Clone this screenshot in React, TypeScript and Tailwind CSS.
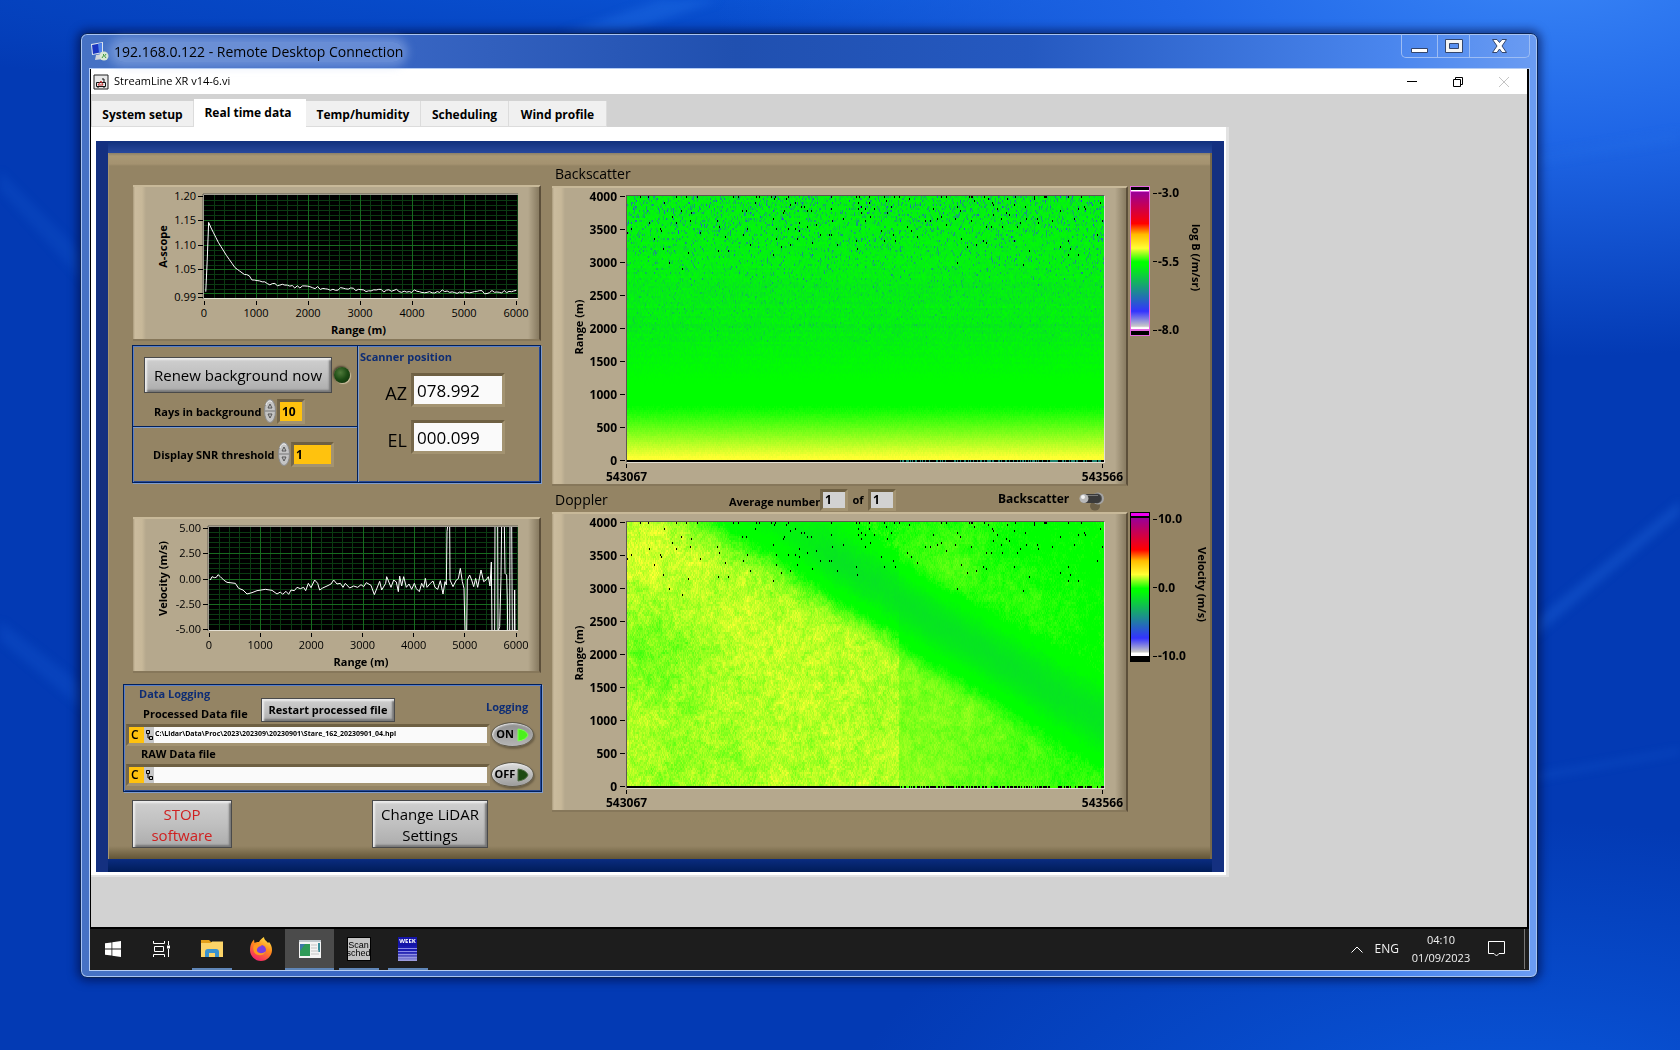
import React, { useEffect, useRef } from "react";

/* ---------- shared numbers and helpers ---------- */

const PLOT_W = 477;
const PLOT_H = 266;

function rng(seed: number) {
  let s = seed;
  return () => {
    s = (s + 0x6d2b79f5) | 0;
    let t = Math.imul(s ^ (s >>> 15), 1 | s);
    t = (t + Math.imul(t ^ (t >>> 7), 61 | t)) ^ t;
    return ((t ^ (t >>> 14)) >>> 0) / 4294967296;
  };
}

type Stop = [number, number, number, number];
const RAMP: Stop[] = [
  [0, 200, 200, 200],
  [0.13, 51, 51, 255],
  [0.49, 0, 255, 0],
  [0.51, 0, 255, 0],
  [0.6, 255, 255, 51],
  [0.7, 255, 187, 0],
  [0.78, 255, 0, 0],
  [1, 153, 0, 153],
];

function colour(t: number): [number, number, number] {
  const v = Math.min(1, Math.max(0, t));
  for (let i = 1; i < RAMP.length; i++) {
    if (v <= RAMP[i][0]) {
      const a = RAMP[i - 1];
      const b = RAMP[i];
      const f = (v - a[0]) / (b[0] - a[0]);
      return [a[1] + (b[1] - a[1]) * f, a[2] + (b[2] - a[2]) * f, a[3] + (b[3] - a[3]) * f];
    }
  }
  return [153, 0, 153];
}

function smooth(t: number) {
  const v = Math.min(1, Math.max(0, t));
  return v * v * (3 - 2 * v);
}

/* Gaussian bump centred on (cu, cv) */
function bump(u: number, v: number, cu: number, cv: number, ru: number, rv: number) {
  const a = (u - cu) / ru;
  const b = (v - cv) / rv;
  return Math.exp(-(a * a + b * b));
}

/* Value noise on a coarse lattice, roughly in -1..1 */
function lattice(seed: number, cw: number, ch: number) {
  const r = rng(seed);
  const cols = Math.ceil(PLOT_W / cw) + 2;
  const rows = Math.ceil(PLOT_H / ch) + 2;
  const g = Array.from({ length: cols * rows }, () => r() * 2 - 1);
  return (x: number, y: number) => {
    const gx = x / cw;
    const gy = y / ch;
    const ix = Math.floor(gx);
    const iy = Math.floor(gy);
    const fx = gx - ix;
    const fy = gy - iy;
    const a = g[iy * cols + ix];
    const b = g[iy * cols + ix + 1];
    const c = g[(iy + 1) * cols + ix];
    const d = g[(iy + 1) * cols + ix + 1];
    return (a * (1 - fx) + b * fx) * (1 - fy) + (c * (1 - fx) + d * fx) * fy;
  };
}

function paintMap(ctx: CanvasRenderingContext2D, kind: "backscatter" | "doppler") {
  const img = ctx.createImageData(PLOT_W, PLOT_H);
  const noise = rng(kind === "backscatter" ? 11 : 29);
  const dropouts = rng(5);
  const floor = rng(91);
  const fine = lattice(3, 4, 5);
  const mid = lattice(8, 11, 13);
  const big = lattice(17, 50, 45);
  const rowTint = rng(44);

  const put = (x: number, y: number, c: number[]) => {
    if (y >= PLOT_H) return;
    const o = (y * PLOT_W + x) * 4;
    img.data[o] = c[0];
    img.data[o + 1] = c[1];
    img.data[o + 2] = c[2];
    img.data[o + 3] = 255;
  };

  for (let y = 0; y < PLOT_H; y += 2) {
    const v = y / PLOT_H;
    const tint = rowTint() - 0.5;
    for (let x = 0; x < PLOT_W; x++) {
      const u = x / PLOT_W;
      const n = noise();
      const m = noise();
      let t: number;
      if (kind === "backscatter") {
        const r = 1 - v;
        if (r < 0.22) {
          t = 0.508 + 0.092 * Math.pow(1 - Math.max(0, r - 0.02) / 0.2, 1.1) + (n - 0.5) * 0.006;
        } else {
          const k = smooth((r - 0.24) / 0.3);
          const fade = 1 - 0.3 * smooth((r - 0.6) / 0.3);
          t = 0.494 - (0.042 * n + 0.012 + tint * 0.016) * k * fade;
          if (r > 0.45 && m < 0.35 * (r - 0.4)) t -= 0.05 * n + 0.02;
          if (r > 0.66 && m < 0.7 * (r - 0.64)) t -= 0.08 * n + 0.02;
          if (r > 0.78 && m < 0.2 * (r - 0.76)) t -= 0.12 * n;
        }
      } else {
        const right = u > 0.57;
        const d = v - (0.02 + (u - 0.32) * 1.04) + (right ? -0.015 : 0);
        let base: number;
        if (d >= 0) {
          base = right
            ? 0.556 - 0.03 * smooth((u - 0.57) / 0.43)
            : 0.568 +
              0.018 * bump(u, v, 0.05, 0.12, 0.15, 0.2) +
              0.016 * bump(u, v, 0.3, 0.46, 0.16, 0.16) +
              0.01 * bump(u, v, 0.45, 0.85, 0.15, 0.2) -
              0.014 * bump(u, v, 0.05, 0.5, 0.16, 0.14) -
              0.01 * bump(u, v, 0.25, 0, 0.12, 0.18);
        } else {
          base = 0.506 + 0.028 * bump(u, v, 0.66, 0.14, 0.13, 0.2) + 0.02 * bump(u, v, 0.83, 0.33, 0.1, 0.14);
        }
        const w = d >= 0 ? 0.26 : 0.21;
        const edge = smooth(Math.abs(d) / w);
        const amp = 0.35 + 0.65 * edge;
        const scale = right ? 0.65 : 1;
        const dark = 0.444 + 0.036 * (1 - smooth((u - 0.28) / 0.2));
        t = dark + (base - dark) * edge;
        t += (big(x, y) * 0.007 + mid(x, y) * 0.007 + fine(x, y) * 0.012 + (n - 0.5) * 0.022) * amp * scale;
      }
      let c: number[] = colour(t);
      const drop = dropouts();
      const chance = y === 0 ? 0.06 : v < 0.27 ? 0.015 * (1 - v / 0.3) : v < 0.3 ? 0.0004 : 0;
      if (drop < chance) c = [0, 0, 0];
      put(x, y, c);
      put(x, y + 1, c);
    }
  }
  for (let x = 0; x < PLOT_W; x++) {
    const lit = x > PLOT_W * 0.57 && floor() < 0.45;
    const c = lit ? (kind === "doppler" ? [60, 255, 0] : [30, 130, 110]) : [0, 0, 0];
    put(x, PLOT_H - 2, c);
    put(x, PLOT_H - 1, c);
  }
  ctx.putImageData(img, 0, 0);
}

/* ---------- graph building blocks ---------- */

function GraphFrame({ children, className }: { children: React.ReactNode; className?: string }) {
  return (
    <div
      className={
        "border-t-2 border-r-2 border-b-2 border-t-[#c8b999] border-r-[#5c4f3a] border-b-[#86775a] bg-[linear-gradient(90deg,#a99a7b_0,#cbbc9e_2px,#c7b899_9px,#b5a88d_13px,#b5a88d_calc(100%-11px),#8b7e64_calc(100%-1px))] " +
        (className ?? "")
      }
    >
      {children}
    </div>
  );
}

type LineGraphProps = {
  x0: number;
  yLabel: string;
  yTicks: { y: number; label: string }[];
  viewBox: string;
  trace: string;
  majorY: number[];
  minorY: number[];
};

function LineGraph({ x0, yLabel, yTicks, viewBox, trace, majorY, minorY }: LineGraphProps) {
  const x1 = 384;
  const top = 8;
  const h = 103;
  const w = x1 - x0;
  return (
    <svg width="408" height="152" className="block font-['Open_Sans',sans-serif]" role="img" aria-label={yLabel + " against range"}>
      <rect x={x0 - 1} y={top - 1} width={w + 2} height={h + 2} fill="#e4dfd2" />
      <path d={`M${x0 - 1} ${top + h + 1}V${top - 1}H${x1 + 1}`} stroke="#5d5a50" fill="none" />
      <rect x={x0} y={top} width={w} height={h} fill="#000" />
      <g stroke="#0b3a12" shapeRendering="crispEdges">
        {Array.from({ length: 30 }, (_, i) => (
          <line key={i} x1={x0 + ((i + 1) * w) / 30} x2={x0 + ((i + 1) * w) / 30} y1={top} y2={top + h} />
        ))}
        {minorY.map((y) => (
          <line key={y} x1={x0} x2={x1} y1={top + y} y2={top + y} />
        ))}
      </g>
      <g stroke="#176b1f" shapeRendering="crispEdges">
        {[1, 2, 3, 4, 5].map((i) => (
          <line key={i} x1={x0 + (i * w) / 6} x2={x0 + (i * w) / 6} y1={top} y2={top + h} />
        ))}
        {majorY.map((y) => (
          <line key={y} x1={x0} x2={x1} y1={top + y} y2={top + y} />
        ))}
      </g>
      <svg x={x0} y={top} width={w} height={h} viewBox={viewBox} preserveAspectRatio="none">
        <polyline points={trace} fill="none" stroke="#fff" vectorEffect="non-scaling-stroke" />
      </svg>
      <g stroke="#000" shapeRendering="crispEdges">
        {yTicks.map((t) => (
          <line key={t.y} x1={x0 - 6} x2={x0 - 1} y1={top + t.y} y2={top + t.y} />
        ))}
        {[0, 1, 2, 3, 4, 5, 6].map((i) => (
          <line key={i} x1={x0 + (i * (w - 1)) / 6} x2={x0 + (i * (w - 1)) / 6} y1={top + h + 3} y2={top + h + 7} />
        ))}
      </g>
      <g fontSize="11">
        {yTicks.map((t) => (
          <text key={t.y} x={x0 - 8} y={top + t.y + 4} textAnchor="end">
            {t.label}
          </text>
        ))}
        {[0, 1, 2, 3, 4, 5, 6].map((i) => (
          <text key={i} x={x0 + (i * (w - 1)) / 6} y={top + h + 19} textAnchor="middle">
            {i * 1000}
          </text>
        ))}
      </g>
      <g fontSize="11" fontWeight="700">
        <text x={x0 + w / 2 - 2} y="147" textAnchor="middle">
          Range (m)
        </text>
        <text textAnchor="middle" transform={`translate(34 ${top + h / 2}) rotate(-90)`}>
          {yLabel}
        </text>
      </g>
    </svg>
  );
}

function HeatGraph({ kind }: { kind: "backscatter" | "doppler" }) {
  const ref = useRef<HTMLCanvasElement>(null);
  useEffect(() => {
    const ctx = ref.current?.getContext("2d");
    if (ctx) paintMap(ctx, kind);
  }, [kind]);
  return (
    <GraphFrame className="h-[300px]">
      <div className="flex pt-[7px]">
        <svg width="74" height="268" className="block shrink-0 overflow-visible font-['Open_Sans',sans-serif] text-[12px] font-bold" aria-hidden="true">
          {[4000, 3500, 3000, 2500, 2000, 1500, 1000, 500, 0].map((v, i) => (
            <g key={v}>
              <text x="65" y={6 + i * 33} textAnchor="end">
                {v}
              </text>
              <line x1="68" x2="73" y1={1 + i * 33} y2={1 + i * 33} stroke="#000" shapeRendering="crispEdges" />
            </g>
          ))}
          <text transform="translate(31 132) rotate(-90)" textAnchor="middle" fontSize="11">
            Range (m)
          </text>
        </svg>
        <canvas
          ref={ref}
          width={PLOT_W}
          height={PLOT_H}
          role="img"
          aria-label={kind + " time and range map"}
          className="box-content block border border-t-[#5d5a50] border-r-[#e4dfd2] border-b-[#e4dfd2] border-l-[#5d5a50]"
        />
      </div>
      <div className="flex justify-between pt-px pr-[3px] pl-[54px] text-[12px] leading-[14px] font-bold">
        <div className="flex flex-col items-center gap-[2px]">
          <span className="h-[4px] w-px bg-black" />
          543067
        </div>
        <div className="flex flex-col items-center gap-[2px]">
          <span className="h-[4px] w-px bg-black" />
          543566
        </div>
      </div>
    </GraphFrame>
  );
}

function ColourScale({ kind, ticks, title }: { kind: "b" | "d"; ticks: string[]; title: string }) {
  return (
    <div className="flex h-[150px] items-start">
      {kind === "b" ? (
        <div className="w-5 shrink-0 border border-[#e668e0]">
          <div className="h-[3px] bg-black" />
          <div className="h-px bg-white" />
          <div className="h-px bg-[#e668e0]" />
          <div className="h-[137px] bg-[linear-gradient(180deg,#990099_0,#ff0000_23%,#ffbb00_31%,#ffff33_41%,#00ff00_51%,#00ff00_53%,#3333ff_87%,#c8c8c8_98%,#fff_99%)]" />
          <div className="h-[2px] bg-[#e668e0]" />
          <div className="h-[4px] bg-black" />
        </div>
      ) : (
        <div className="w-5 shrink-0 border border-black">
          <div className="h-[3px] bg-[#f000f0]" />
          <div className="h-[2px] bg-black" />
          <div className="h-[138px] bg-[linear-gradient(180deg,#990099_0,#ff0000_23%,#ffbb00_31%,#ffff33_41%,#00ff00_51%,#00ff00_53%,#3333ff_87%,#c8c8c8_97%,#fff_98%)]" />
          <div className="h-[5px] bg-black" />
        </div>
      )}
      <div className="ml-[3px] flex h-[151px] w-[35px] shrink-0 flex-col justify-between text-[12px] leading-[14px] font-bold">
        {ticks.map((t) => (
          <div key={t} className="flex items-center whitespace-nowrap">
            <span className="mr-px h-px w-[4px] shrink-0 bg-black" />
            {t}
          </div>
        ))}
      </div>
      <div
        className={
          "text-[11px] leading-[14px] font-bold whitespace-nowrap [writing-mode:vertical-rl] " +
          (kind === "b" ? "mt-[38px] ml-px" : "mt-[35px] ml-[7px]")
        }
      >
        {title}
      </div>
    </div>
  );
}

/* ---------- trace data ---------- */

const aScope = (() => {
  const knots = [
    [350, 785], [354, 690], [358, 575], [365, 592], [385, 635], [408, 675], [432, 712], [465, 738],
    [494, 751], [530, 762], [600, 769], [700, 776], [850, 782], [1000, 784], [1140, 787], [1222, 781],
  ];
  const r = rng(7);
  const out: string[] = [];
  for (let i = 1; i < knots.length; i++) {
    const [ax, ay] = knots[i - 1];
    const [bx, by] = knots[i];
    const n = Math.max(1, Math.round((bx - ax) / 7));
    for (let k = 0; k < n; k++) {
      const jitter = ax > 460 ? (r() - 0.5) * 10 : 0;
      out.push(`${ax + ((bx - ax) * k) / n},${ay + ((by - ay) * k) / n + jitter}`);
    }
  }
  out.push("1222,781");
  return out.join(" ");
})();

const velocity =
  "270,240 275,230 282,233 288,232 293,224 300,230 310,240 320,247 345,250 355,265 368,270 380,282 395,278 410,272 435,268 455,271 470,282 480,276 487,283 497,274 505,283 512,270 522,272 530,262 540,266 550,262 556,272 564,250 572,263 583,240 592,250 598,270 607,264 620,258 632,252 640,240 650,252 660,250 668,262 675,250 688,264 700,258 712,262 722,254 730,260 738,248 752,256 762,284 778,244 784,270 796,250 799,230 812,262 820,240 828,246 834,275 838,228 844,258 850,230 858,262 866,252 874,268 882,250 888,266 897,275 904,250 910,262 915,235 920,262 930,250 938,243 944,262 952,268 960,242 968,282 974,245 978,255 980,94 983,70 988,70 989,240 998,260 1008,240 1014,236 1020,205 1026,245 1031,265 1034,395 1039,395 1041,240 1048,225 1054,240 1060,260 1066,235 1072,262 1082,210 1090,245 1097,240 1104,230 1109,258 1113,186 1115,395 1123,395 1124,70 1132,70 1133,395 1138,380 1142,230 1144,70 1152,70 1154,220 1159,225 1161,300 1162,395 1168,395 1169,70 1174,70 1176,395 1182,395 1183,270 1184,395";

/* ---------- LabVIEW controls ---------- */

function BevelButton({ children, className }: { children: React.ReactNode; className: string }) {
  return (
    <button
      type="button"
      className={
        "border border-[#4a4a4a] bg-gradient-to-b from-[#cfcfcf] via-[#c0c0c0] to-[#acacac] shadow-[inset_2px_2px_2px_#ececec,inset_-2px_-2px_2px_#777] " +
        className
      }
    >
      {children}
    </button>
  );
}

function Spinner() {
  return (
    <svg width="12" height="24" viewBox="0 0 12 24" aria-hidden="true">
      <ellipse cx="6" cy="12" rx="5.5" ry="11.5" fill="#c4c4c4" stroke="#8b8b8b" />
      <path d="M2 6C3 2 6 1 8 3" stroke="#f4f4f4" fill="none" />
      <path d="M1 12H11" stroke="#777" />
      <path d="M6 5L8 9H4ZM6 19L8 15H4Z" fill="none" stroke="#555" />
    </svg>
  );
}

const sunken =
  "border-t-[3px] border-l-[3px] border-r-[3px] border-b-[3px] border-t-[#6e6043] border-l-[#75674a] border-r-[#a39371] border-b-[#a39371] ";

function BoxLine({ children, className }: { children: React.ReactNode; className: string }) {
  return (
    <div className={"border border-[#00205c] shadow-[inset_1px_1px_0_#5c7fc4,inset_-1px_-1px_0_#274894,1px_1px_0_#7f9ccc] " + className}>
      {children}
    </div>
  );
}

function PathRow({ id, value, on }: { id: string; value: string; on: boolean }) {
  return (
    <div className="flex items-center">
      <div className={"flex h-[22px] w-[364px] " + sunken}>
        <span className="flex w-[15px] items-center bg-[#ffc20e] pl-[2px] text-[12px] font-semibold">C</span>
        <span className="flex w-[10px] items-center justify-center bg-[#c6c6c6]">
          <svg width="8" height="12" viewBox="0 0 8 12" fill="none" stroke="#000" aria-hidden="true">
            <path d="M1.5 1.5H4.5V4.5H1.5ZM4.5 7.500H7.500V10.500H4.500ZM3 5V9H4.500" />
          </svg>
        </span>
        <input id={id} type="text" defaultValue={value} className="min-w-0 flex-1 bg-[#fafafa] px-px pb-px text-[7px] font-bold outline-none" />
      </div>
      <button
        type="button"
        aria-pressed={on}
        className={
          "ml-px flex h-[25px] w-[43px] items-center rounded-[50%] border border-[#5f5a4c] pl-px text-[11px] font-bold shadow-[1px_2px_2px_#6b5f47,inset_1px_1px_2px_#eee] " +
          (on ? "bg-gradient-to-b from-[#8e8e8e] to-[#b5b5b5]" : "bg-gradient-to-b from-[#dcdcdc] to-[#9c9c9c]")
        }
      >
        <span className="w-[24px] text-center">{on ? "ON" : "OFF"}</span>
        <svg width="12" height="14" viewBox="0 0 12 14" aria-hidden="true">
          <path d="M1 1Q9 2 11 7Q9 12 1 13Z" fill={on ? "#4cf01c" : "#1d4a12"} stroke={on ? "#7dff55" : "#4c6a40"} />
        </svg>
      </button>
    </div>
  );
}

function LeftColumn() {
  return (
    <div className="w-[420px] shrink-0 pt-[32px]">
      <div className="pl-[10px]">
        <GraphFrame className="h-[156px] w-[408px]">
          <LineGraph
            x0={71}
            yLabel="A-scope"
            yTicks={[
              { y: 1, label: "1.20" },
              { y: 25, label: "1.15" },
              { y: 50, label: "1.10" },
              { y: 74, label: "1.05" },
              { y: 98, label: "" },
              { y: 102, label: "0.99" },
            ]}
            viewBox="345 492 879 312"
            trace={aScope}
            majorY={[25, 50, 74, 98]}
            minorY={[5, 10, 15, 20, 30, 35, 40, 45, 55, 60, 65, 70, 79, 84, 89, 94]}
          />
        </GraphFrame>
      </div>

      <BoxLine className="mt-1 ml-[9px] flex h-[138px] w-[409px]">
        <div className="flex w-[225px] flex-col border-r border-[#00205c] shadow-[1px_0_0_#7f9ccc]">
          <div className="h-[81px] border-b border-[#00205c] pt-[11px] pl-[11px] shadow-[0_1px_0_#7f9ccc]">
            <div className="flex items-center">
              <BevelButton className="h-[36px] w-[188px] pt-px text-[15px] whitespace-nowrap">Renew background now</BevelButton>
              <span className="ml-[2px] size-[16px] rounded-full bg-[radial-gradient(circle_at_40%_35%,#4f7a3a,#1c4a14_50%,#0d2a0a)] shadow-[1px_1px_1px_#cfc3a2,-1px_-1px_2px_#4a4030]" />
            </div>
            <div className="mt-[5px] flex items-center pl-[10px]">
              <label htmlFor="rays" className="w-[108px] pt-[2px] text-[11px] leading-4 font-bold whitespace-nowrap">
                Rays in background
              </label>
              <span className="ml-[2px]">
                <Spinner />
              </span>
              <input id="rays" type="text" defaultValue="10" className={"mt-px ml-px h-[25px] w-[28px] bg-[#ffc20e] px-[2px] text-[12px] font-bold outline-none " + sunken} />
            </div>
          </div>
          <div className="flex items-center pt-[14px] pl-[20px]">
            <label htmlFor="snr" className="w-[124px] pt-[2px] text-[11px] leading-4 font-bold whitespace-nowrap">
              Display SNR threshold
            </label>
            <span className="ml-px">
              <Spinner />
            </span>
            <input id="snr" type="text" defaultValue="1" className={"mt-px ml-px h-[25px] w-[43px] bg-[#ffc20e] px-[2px] text-[12px] font-bold outline-none " + sunken} />
          </div>
        </div>
        <div className="flex-1 pt-[3px] pl-[2px]">
          <h3 className="text-[11px] leading-4 font-bold text-[#0e2d74]">Scanner position</h3>
          {[
            ["AZ", "078.992", "az", "mt-[8px]"],
            ["EL", "000.099", "el", "mt-[13px]"],
          ].map(([name, value, id, gap]) => (
            <div key={id} className={"flex items-center " + gap}>
              <label htmlFor={id} className="w-[47px] pt-[5px] text-right text-[18px] leading-6">
                {name}
              </label>
              <input id={id} readOnly defaultValue={value} className={"ml-1 h-[34px] w-[94px] bg-[#fafafa] px-[3px] pt-px text-[17px] outline-none " + sunken} />
            </div>
          ))}
        </div>
      </BoxLine>

      <div className="mt-[34px] pl-[10px]">
        <GraphFrame className="h-[156px] w-[408px]">
          <LineGraph
            x0={76}
            yLabel="Velocity (m/s)"
            yTicks={[
              { y: 1, label: "5.00" },
              { y: 26, label: "2.50" },
              { y: 52, label: "0.00" },
              { y: 77, label: "-2.50" },
              { y: 102, label: "-5.00" },
            ]}
            viewBox="266 81 924 309"
            trace={velocity}
            majorY={[26, 52, 77]}
            minorY={[5, 10, 15, 20, 31, 36, 41, 46, 57, 62, 67, 72, 82, 87, 92, 97]}
          />
        </GraphFrame>
      </div>

      <BoxLine className="mt-[11px] h-[108px] w-[419px] pl-[2px]">
        <div className="flex h-[37px] pl-[8px]">
          <div className="w-[127px] pt-[1px] pl-[5px]">
            <h3 className="text-[11px] leading-4 font-bold text-[#0e2d74]">Data Logging</h3>
            <label htmlFor="proc" className="block pt-[4px] pl-[4px] text-[11px] leading-4 font-bold whitespace-nowrap">
              Processed Data file
            </label>
          </div>
          <div className="pt-[11px]">
            <BevelButton className="h-[24px] w-[134px] text-[11px] font-bold whitespace-nowrap">Restart processed file</BevelButton>
          </div>
          <span className="pt-[14px] pl-[91px] text-[11px] leading-4 font-bold text-[#0e2d74]">Logging</span>
        </div>
        <PathRow id="proc" value="C:\Lidar\Data\Proc\2023\202309\20230901\Stare_162_20230901_04.hpl" on />
        <label htmlFor="raw" className="block h-[15px] pl-[15px] text-[11px] leading-[14px] font-bold">
          RAW Data file
        </label>
        <PathRow id="raw" value="" on={false} />
      </BoxLine>

      <div className="mt-[8px] flex pl-[9px]">
        <BevelButton className="h-[48px] w-[100px] pt-[2px] text-[15px] leading-[21px] text-[#cf2020]">
          STOP
          <br />
          software
        </BevelButton>
        <BevelButton className="ml-[140px] h-[48px] w-[116px] pt-[2px] text-[15px] leading-[21px] whitespace-nowrap">
          Change LiDAR
          <br />
          Settings
        </BevelButton>
      </div>
    </div>
  );
}

function LidarPanel() {
  const counter = "mt-px h-[22px] w-[28px] bg-[#d2d2d2] px-[2px] text-[12px] font-bold outline-none " + sunken;
  return (
    <div className="border-x-[12px] border-x-[#143080] bg-[linear-gradient(180deg,#10307c_0,#28489c_12px,#0a2c80_calc(100%-13px),#001c58)] pt-[12px] pb-[13px]">
      <div className="flex h-[706px] w-[1104px] border-r-2 border-l border-r-[#776849] border-l-[#a6956f] bg-[linear-gradient(180deg,#8a7f68_0,#a99874_3px,#a49270_11px,#948464_13px,#948464_calc(100%-13px),#625536)] pl-[14px]">
        <LeftColumn />
        <div className="ml-[9px] w-[576px] shrink-0">
          <h2 className="h-[33px] pt-[11px] pl-[3px] text-[14px] leading-[20px]">Backscatter</h2>
          <HeatGraph kind="backscatter" />
          <div className="flex h-[26px] items-center pl-[3px]">
            <h2 className="w-[174px] pt-[2px] text-[14px] leading-[20px]">Doppler</h2>
            <label htmlFor="avg" className="w-[91px] pt-[6px] text-[11px] leading-4 font-bold whitespace-nowrap">
              Average number
            </label>
            <input id="avg" readOnly defaultValue="1" className={counter} />
            <label htmlFor="avgof" className="w-[20px] pt-[2px] text-center text-[11px] leading-4 font-bold">
              of
            </label>
            <input id="avgof" readOnly defaultValue="1" className={counter} />
            <span className="ml-[102px] text-[12px] font-bold">Backscatter</span>
            <button type="button" aria-label="Switch between backscatter and SNR" className="mt-1 ml-[9px]">
              <svg width="28" height="20" viewBox="0 0 28 20" aria-hidden="true">
                <ellipse cx="17" cy="15" rx="5" ry="4.500" fill="#6b5f47" />
                <circle cx="20" cy="7.500" r="6" fill="#a4a4a4" />
                <circle cx="19" cy="7.500" r="5" fill="#555" />
                <rect x="2" y="3" width="21" height="9" rx="4.500" fill="#3a3a3a" />
                <path d="M6 4.500H20" stroke="#777" />
                <circle cx="6" cy="7.500" r="4.500" fill="#b9b9b9" />
                <circle cx="5" cy="6" r="2" fill="#f4f4f4" />
              </svg>
            </button>
          </div>
          <HeatGraph kind="doppler" />
        </div>
        <div className="ml-[2px] pt-[33px]">
          <ColourScale kind="b" ticks={["-3.0", "-5.5", "-8.0"]} title="log B (/m/sr)" />
          <div className="h-[176px]" />
          <ColourScale kind="d" ticks={["10.0", "0.0", "-10.0"]} title="Velocity (m/s)" />
        </div>
      </div>
    </div>
  );
}

/* ---------- remote session chrome ---------- */

function Tabs() {
  const tabs = [
    ["System setup", "w-[102px]"],
    ["Real time data", "w-[112px]"],
    ["Temp/humidity", "w-[115px]"],
    ["Scheduling", "w-[88px]"],
    ["Wind profile", "w-[98px]"],
  ];
  return (
    <div role="tablist" className="flex h-[33px] items-end pl-px">
      {tabs.map(([name, width], i) => (
        <button
          key={name}
          type="button"
          role="tab"
          aria-selected={i === 1}
          className={
            "text-[12px] font-bold whitespace-nowrap " +
            width +
            (i === 1 ? " h-[28px] bg-white pr-[4px] pb-px" : " h-[26px] border-r border-b border-[#dcdcdc] bg-[#f0f0f0] pt-[2px]")
          }
        >
          {name}
        </button>
      ))}
    </div>
  );
}

function TaskItem({
  label,
  open,
  active,
  width = "w-[49px]",
  children,
}: {
  label: string;
  open?: boolean;
  active?: boolean;
  width?: string;
  children: React.ReactNode;
}) {
  return (
    <button type="button" aria-label={label} className={"flex h-full flex-col items-center " + width + (active ? " bg-[#4b4b4b]" : "")}>
      <span className="flex flex-1 items-center">{children}</span>
      <span className={"h-[2px] " + (active ? "w-full bg-[#5f86b8]" : open ? "w-[40px] bg-[#5f86b8]" : "w-0")} />
    </button>
  );
}

function Taskbar() {
  return (
    <div className="flex h-[41px] items-stretch bg-[#1d1d1d] text-[#f2f2f2]">
      <TaskItem label="Start" width="w-[46px]">
        <svg width="16" height="16" viewBox="0 0 16 16" fill="#fff">
          <path d="M0 2.300L6.500 1.400V7.600H0ZM7.300 1.300L16 0V7.600H7.300ZM0 8.400H6.500V14.600L0 13.700ZM7.300 8.400H16V16L7.300 14.700Z" />
        </svg>
      </TaskItem>
      <TaskItem label="Task view" width="w-[51px]">
        <svg width="17" height="16" viewBox="0 0 17 16" fill="none" stroke="#fff">
          <path d="M0.500 0V2.500H11.500V0M0.500 16V13.500H11.500V16M1.500 5.500H10.500V10.500H1.500ZM15.500 0V4M15.500 8V16" />
          <path d="M14 4.500H17V7.500H14Z" fill="#fff" stroke="none" />
        </svg>
      </TaskItem>
      <TaskItem label="File Explorer" open>
        <svg width="22" height="19" viewBox="0 0 22 19">
          <path d="M0 1H8L10 3H22V18H0Z" fill="#e5a11a" />
          <path d="M0 4H10L11 2.500H22V18H0Z" fill="#fcd468" />
          <path d="M4 18V13Q4 10 7 10H15Q18 10 18 13V18H14V14H8V18Z" fill="#3a92cf" />
        </svg>
      </TaskItem>
      <TaskItem label="Firefox">
        <svg width="24" height="24" viewBox="0 0 24 24">
          <defs>
            <linearGradient id="ff" x1="0.8" y1="0" x2="0.3" y2="1">
              <stop offset="0" stopColor="#ffe94a" />
              <stop offset="0.45" stopColor="#ff8a1c" />
              <stop offset="1" stopColor="#f5206c" />
            </linearGradient>
          </defs>
          <path d="M1 13C1 9 2 7 3 5L5 2.500L5.500 6C7 5 8 5 10 5C11 3 13 1 15 0C15 3 18 4 19 6L20 5C22 7 23 10 23 13C23 19 18 24 12 24C6 24 1 19 1 13Z" fill="url(#ff)" />
          <circle cx="12" cy="13" r="5" fill="#7a3fe0" />
          <path d="M5 8C8 6 11 7 13 9C10 9 9 10 8 12C7 16 13 18 17 14C16 19 8 20 5 15C4 12 4 10 5 8Z" fill="#ff9a1f" />
        </svg>
      </TaskItem>
      <TaskItem label="StreamLine XR" active>
        <svg width="22" height="18" viewBox="0 0 22 18">
          <path d="M0 0H22V18H0Z" fill="#f4f4f4" />
          <path d="M0 0H22V2H0Z" fill="#bfc7cc" />
          <path d="M1 4H11V16H1Z" fill="#2f9a58" />
          <path d="M1 4H6L1 11Z" fill="#3c78a8" />
          <path d="M19 3H21V12H19Z" fill="#3b8f9a" />
          <path d="M12 5H18M12 8H18M12 11H20M12 14H20" stroke="#c4c4c4" />
        </svg>
      </TaskItem>
      <TaskItem label="Scan scheduler" open>
        <span className="flex size-[24px] flex-col items-center justify-center border border-black bg-[#c4c4c4] font-['Liberation_Sans',sans-serif] text-[9px] leading-[8px] text-black">
          <span>Scan</span>
          <span>sched</span>
        </span>
      </TaskItem>
      <TaskItem label="Week scheduler" open>
        <span className="flex h-[24px] w-[19px] flex-col items-center bg-[linear-gradient(180deg,transparent_60%,#9c9cdc),repeating-linear-gradient(180deg,#1a1ab0_0,#1a1ab0_2px,#8a8ae8_2px,#8a8ae8_3px)] text-[6px] leading-[9px] font-bold text-white">
          <span className="w-full bg-[#1414a8]">WEEK</span>
        </span>
      </TaskItem>
      <div className="ml-auto flex items-center pb-px text-[12px]">
        <button type="button" aria-label="Show hidden icons">
          <svg width="12" height="7" viewBox="0 0 12 7" fill="none" stroke="#fff">
            <path d="M0.500 6.500L6 1L11.500 6.500" />
          </svg>
        </button>
        <span className="ml-[12px]">ENG</span>
        <div className="ml-[12px] w-[60px] text-center text-[11px] leading-[18px]">
          04:10
          <br />
          01/09/2023
        </div>
        <button type="button" aria-label="Notifications" className="ml-[17px]">
          <svg width="17" height="16" viewBox="0 0 17 16" fill="none" stroke="#fff">
            <path d="M0.500 0.500H16.500V12.500H11L8.500 15L6 12.500H0.500Z" />
          </svg>
        </button>
        <span className="ml-[19px] h-[40px] w-px bg-[#777]" />
        <span className="w-[4px]" />
      </div>
    </div>
  );
}

export default function App() {
  return (
    <div className="relative min-h-screen overflow-hidden bg-[#033ab4] bg-[radial-gradient(ellipse_50%_38%_at_92%_-4%,#3a86f8_0,#1f66e6_45%,transparent_100%),radial-gradient(ellipse_70%_12%_at_50%_-2%,#0a56d8,transparent),radial-gradient(ellipse_40%_30%_at_90%_108%,#0a58dc,transparent)] pt-[33px] pr-[142px] pb-[73px] pl-[80px] font-['Open_Sans','Noto_Sans',sans-serif] text-black">
      <svg className="absolute inset-0 h-full w-full" viewBox="0 0 1680 1050" preserveAspectRatio="none" aria-hidden="true">
        <g fill="#2a7af0" className="blur-[4px]">
          <path d="M560 34L660 0H720L620 34Z" opacity="0.300" />
          <path d="M1530 155L1680 130V142L1530 165Z" opacity="0.120" />
          <path d="M1530 624L1680 500V514L1530 640Z" opacity="0.250" />
          <path d="M1530 774L1680 748V753L1530 780Z" opacity="0.180" />
          <path d="M0 170L90 260V290L0 190Z" opacity="0.120" />
          <path d="M0 620L90 690V715L0 640Z" opacity="0.150" />
        </g>
      </svg>
      <div className="relative rounded-[7px] border border-[#0a2558] bg-[linear-gradient(90deg,#4672c4_0,#3a67c4_20%,#2050b0_45%,#2559c0_65%,#4a86ee_90%,#6b9cf2_100%)] pr-[7px] pb-[6px] pl-[8px] shadow-[inset_0_0_0_1px_#a9c4f2,0_0_10px_3px_rgba(0,10,60,0.6)]">
        <div className="flex h-[34px] items-start">
          <svg width="20" height="20" viewBox="0 0 20 20" className="mt-[8px] ml-px" aria-hidden="true">
            <path d="M1 2L13 0V11L2 13Z" fill="#dfe6ee" />
            <path d="M2 3L12 1V10L3 12Z" fill="#1a35c0" />
            <path d="M8 2L12 1V10L9 10.500Z" fill="#4f83ea" />
            <path d="M6 13L12 12L13 17L5 18Z" fill="#cfd5da" />
            <circle cx="14" cy="14" r="4.500" fill="#d9e8d4" />
            <path d="M12 16L14 13L13 12M16 12L14.500 14L16 16" stroke="#3b9b3b" fill="none" />
          </svg>
          <h1 className="mt-[8px] ml-[4px] rounded-full bg-[#a9c4f0]/40 text-[14px] leading-[20px] shadow-[0_0_8px_5px_rgba(169,196,240,0.4)]">
            192.168.0.122 - Remote Desktop Connection
          </h1>
          <div className="ml-auto flex h-[24px] w-[129px] items-stretch rounded-b-[5px] border border-t-0 border-[#9dbdf4]">
            <button type="button" aria-label="Minimize" className="flex w-[36px] items-center justify-center border-r border-[#9dbdf4]">
              <svg width="17" height="14" viewBox="0 0 17 14">
                <path d="M0.500 9.500H16.500V13.500H0.500Z" fill="#fff" stroke="#34466c" />
              </svg>
            </button>
            <button type="button" aria-label="Maximize" className="flex w-[32px] items-center justify-center border-r border-[#9dbdf4]">
              <svg width="18" height="14" viewBox="0 0 18 14">
                <path d="M0.500 0.500H17.500V13.500H0.500ZM4.500 4.500V9.500H13.500V4.500Z" fill="#f4f4f4" stroke="#34466c" fillRule="evenodd" />
              </svg>
            </button>
            <button type="button" aria-label="Close" className="flex flex-1 items-center justify-center">
              <svg width="15" height="14" viewBox="0 0 15 14">
                <path d="M0.500 0.500H5L7.500 3.500L10 0.500H14.500L10 7L14.500 13.500H10L7.500 10L5 13.500H0.500L5 7Z" fill="#fff" stroke="#34466c" />
              </svg>
            </button>
          </div>
        </div>
        <div className="border border-[#b4ccf4] bg-black">
          <div className="mr-[2px] ml-px">
            <div className="flex h-[25px] items-center bg-white">
              <svg width="16" height="16" viewBox="0 0 16 16" className="ml-[2px]" aria-hidden="true">
                <path d="M1 1H15V15H1Z" fill="#e8e8e8" stroke="#222" />
                <path d="M3.500 12.500V8.500H12.500V12.500ZM5 14V12M11 14V12M9 5H11V9" fill="none" stroke="#111" />
                <path d="M5 11L8 7L10 11Z" fill="none" stroke="#c43030" />
              </svg>
              <span className="ml-[5px] text-[11px]">StreamLine XR v14-6.vi</span>
              <div className="mr-[18px] ml-auto flex items-center gap-[36px]">
                <button type="button" aria-label="Minimize session window">
                  <svg width="10" height="10" viewBox="0 0 10 10" stroke="#000">
                    <path d="M0 4.500H10" />
                  </svg>
                </button>
                <button type="button" aria-label="Restore session window">
                  <svg width="10" height="10" viewBox="0 0 10 10" fill="none" stroke="#000">
                    <path d="M0.500 2.500H7.500V9.500H0.500ZM2.500 2.500V0.500H9.500V7.500H7.500" />
                  </svg>
                </button>
                <button type="button" aria-label="Close session window">
                  <svg width="10" height="10" viewBox="0 0 10 10" stroke="#c4c4c4">
                    <path d="M0 0L10 10M10 0L0 10" />
                  </svg>
                </button>
              </div>
            </div>
            <div className="bg-[#d2d2d2] pb-[50px]">
              <Tabs />
              <main className="w-fit border-r-[3px] border-b-2 border-[#e2e2e2] bg-white pt-[14px] pr-[2px] pb-[3px] pl-[5px]">
                <LidarPanel />
              </main>
            </div>
          </div>
          <div className="pt-[2px]">
            <Taskbar />
          </div>
        </div>
      </div>
    </div>
  );
}
